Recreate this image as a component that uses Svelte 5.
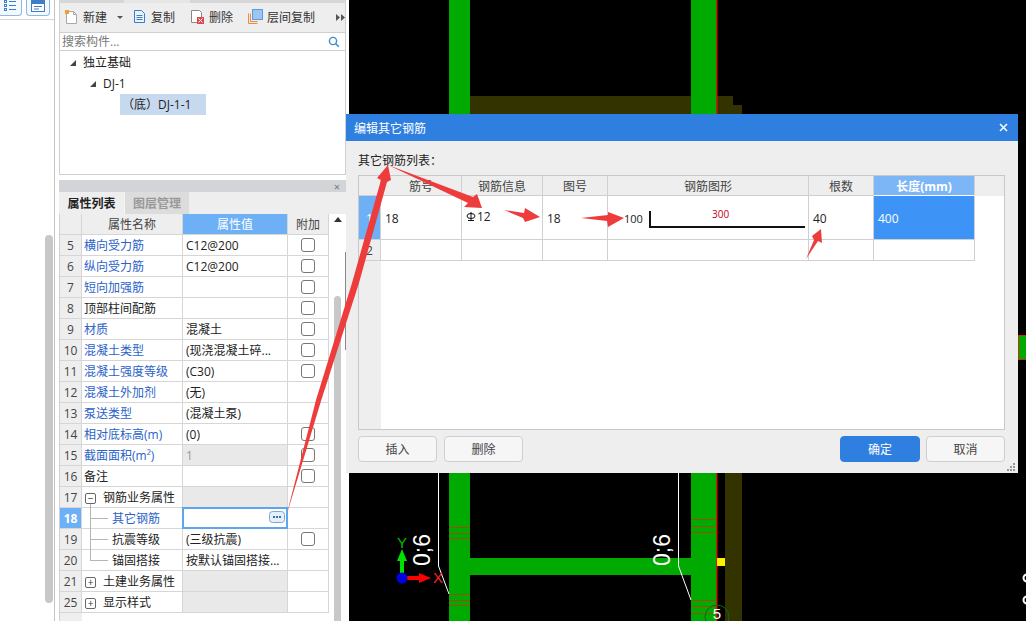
<script>
  const rows = [
    { n: 5, name: '横向受力筋', val: 'C12@200', blue: true, chk: true },
    { n: 6, name: '纵向受力筋', val: 'C12@200', blue: true, chk: true },
    { n: 7, name: '短向加强筋', val: '', blue: true, chk: true },
    { n: 8, name: '顶部柱间配筋', val: '', chk: true },
    { n: 9, name: '材质', val: '混凝土', blue: true, chk: true },
    { n: 10, name: '混凝土类型', val: '(现浇混凝土碎...', blue: true, chk: true },
    { n: 11, name: '混凝土强度等级', val: '(C30)', blue: true, chk: true },
    { n: 12, name: '混凝土外加剂', val: '(无)', blue: true },
    { n: 13, name: '泵送类型', val: '(混凝土泵)', blue: true },
    { n: 14, name: '相对底标高(m)', val: '(0)', blue: true, chk: true },
    { n: 15, name: '截面面积(m²)', val: '1', blue: true, chk: true, off: true },
    { n: 16, name: '备注', val: '', chk: true },
    { n: 17, name: '钢筋业务属性', val: '', off: true, group: '−', open: true },
    { n: 18, name: '其它钢筋', val: '', blue: true, child: true, sel: true },
    { n: 19, name: '抗震等级', val: '(三级抗震)', child: true, chk: true },
    { n: 20, name: '锚固搭接', val: '按默认锚固搭接...', child: true, last: true },
    { n: 21, name: '土建业务属性', val: '', off: true, group: '+' },
    { n: 25, name: '显示样式', val: '', off: true, group: '+' }
  ];
  const hatch = [
    [449, 470, [527, 533, 538, 594, 600, 605]],
    [691, 716, [519, 526, 532, 600, 606, 613]]
  ];
</script>

<div class="app">
  <aside class="rail">
    <div class="rail-tools">
      <div class="rail-btn">
        <svg width="14" height="12" viewBox="0 0 14 12"><g fill="none" stroke="#3c7fc8"><rect x="1.5" y="0.5" width="2" height="2"/><rect x="1.5" y="4.5" width="2" height="2"/><rect x="1.5" y="8.5" width="2" height="2"/><path d="M6 1.5h7M6 5.5h7M6 9.5h7"/></g></svg>
      </div>
      <div class="rail-btn">
        <svg width="15" height="12" viewBox="0 0 15 12"><rect x="0.5" y="0.5" width="13" height="11" fill="#fff" stroke="#3c7fc8"/><rect x="1" y="1" width="12" height="3" fill="#3c7fc8"/><path d="M3 6.5h8M3 9h5" stroke="#3c7fc8"/></svg>
      </div>
    </div>
    <div class="rail-thumb"></div>
  </aside>

  <section class="panel">
    <div class="top-strip"><span class="top-tab"></span></div>
    <div class="toolbar">
      <span class="tool new">
        <svg width="15" height="15" viewBox="0 0 15 15"><path d="M2.500 2.500h7l3 3v9h-10z" fill="#fff" stroke="#a9a9a9"/><path d="M9.500 2.500v3h3" fill="none" stroke="#a9a9a9"/><rect x="1" y="1" width="4" height="4" fill="#f0a030"/></svg>
        新建<i class="caret"></i>
      </span>
      <span class="tool copy">
        <svg width="13" height="15" viewBox="0 0 13 15"><path d="M1.500 1.500h7l3 3v9h-10z" fill="#eaf3fb" stroke="#3b7fc4"/><path d="M3.500 6.500h6M3.500 8.500h6M3.500 10.500h6" stroke="#3b7fc4"/></svg>
        复制
      </span>
      <span class="tool del">
        <svg width="15" height="15" viewBox="0 0 15 15"><path d="M1.500 1.500h8l2 2v10h-10z" fill="#fff" stroke="#888"/><rect x="7" y="8" width="7" height="7" fill="#d9484c"/><path d="M8.500 9.500l4 4M12.500 9.500l-4 4" stroke="#fff"/></svg>
        删除
      </span>
      <span class="tool floor">
        <svg width="15" height="15" viewBox="0 0 15 15"><path d="M.5 4.500v10h9" fill="none" stroke="#e88a40"/><path d="M2.500 4.500v8h7" fill="none" stroke="#e88a40"/><rect x="4.500" y="0.500" width="10" height="10" fill="#9cc6f2" stroke="#5d9ade"/></svg>
        层间复制
      </span>
      <svg class="more" width="9" height="7" viewBox="0 0 9 7"><path d="M0 0l4 3.500L0 7zM5 0l4 3.500L5 7z" fill="#555"/></svg>
    </div>
    <div class="search">
      <span>搜索构件...</span>
      <svg width="12" height="12" viewBox="0 0 12 12"><circle cx="5" cy="5" r="3.600" fill="none" stroke="#3c8ccc" stroke-width="1.400"/><path d="M7.800 7.800l3 3" stroke="#3c8ccc" stroke-width="1.600"/></svg>
    </div>
    <div class="tree">
      <div class="node lv0"><i class="tri"></i>独立基础</div>
      <div class="node lv1"><i class="tri"></i>DJ-1</div>
      <div class="node lv2"><span class="picked">（底）DJ-1-1</span></div>
    </div>

    <div class="prop-head"><span>×</span></div>
    <div class="tabs">
      <span class="tab on">属性列表</span>
      <span class="tab">图层管理</span>
    </div>
    <div class="prop-body">
      <div class="grid">
        <div class="row head">
          <div class="c num"></div>
          <div class="c title">属性名称</div>
          <div class="c title hot">属性值</div>
          <div class="c title">附加</div>
        </div>
        {#each rows as r}
          <div class="row">
            <div class="c num" class:numsel={r.sel}>{r.n}</div>
            <div class="c name" class:blue={r.blue} class:child={r.child} class:last={r.last} class:grp={r.group} class:open={r.open}>
              {#if r.group}<i class="box">{r.group}</i>{/if}{r.name}
            </div>
            <div class="c val" class:off={r.off} class:sel={r.sel}>
              {r.val}
              {#if r.sel}
                <svg class="dots" width="16" height="12" viewBox="0 0 16 12"><rect x="0.500" y="0.500" width="15" height="11" rx="3" fill="#e4f0fb" stroke="#7fa6cc"/><path d="M4 5h2v2H4zM7 5h2v2H7zM10 5h2v2h-2z" fill="#3c6ea0"/></svg>
              {/if}
            </div>
            <div class="c add">{#if r.chk}<i class="chk"></i>{/if}</div>
          </div>
        {/each}
        <div class="grid-rest"></div>
      </div>
      <div class="vscroll">
        <i class="up"></i>
        <div class="vthumb"></div>
      </div>
    </div>
    <div class="edge-mark"></div>
  </section>

  <main class="canvas">
    <svg width="677" height="621" viewBox="349 0 677 621">
      <path d="M470 96H733V105H742V114H470z" fill="#333300"/>
      <rect x="725" y="473" width="17" height="148" fill="#333300"/>
      <rect x="449" y="0" width="21" height="621" fill="#00aa00"/>
      <rect x="691" y="0" width="25" height="621" fill="#00aa00"/>
      <rect x="716" y="0" width="1.500" height="621" fill="#c81e00"/>
      <rect x="470" y="558" width="221" height="17" fill="#00aa00"/>
      <rect x="717" y="558" width="8" height="8" fill="#ffee00"/>
      <rect x="1018.500" y="335.500" width="10" height="24" fill="#00aa00" stroke="#c83000"/>
      {#each hatch as h}
        {#each h[2] as y}
          <path d="M{h[0]} {y + 0.5}H{h[1]}" stroke="#a04a10" stroke-width="1"/>
        {/each}
      {/each}
      <path d="M438.500 473V566L449 594M678.500 473V566L691 600" fill="none" stroke="#fff" stroke-width="1"/>
      <text class="dim" transform="translate(430 566) rotate(-90)">0;6</text>
      <text class="dim" transform="translate(670 566) rotate(-90)">0;6</text>
      <path d="M402 578V560" stroke="#00e000" stroke-width="4"/>
      <path d="M402 549L407 561H397z" fill="#00e000"/>
      <path d="M402 578H420" stroke="#ff0000" stroke-width="4"/>
      <path d="M431 578L419 573V583z" fill="#ff0000"/>
      <circle cx="402" cy="578" r="5.500" fill="#0000e0"/>
      <text class="axis" x="402" y="548" fill="#00c000" text-anchor="middle">Y</text>
      <text class="axis" x="438" y="583" fill="#ff2020" text-anchor="middle">X</text>
      <circle cx="717" cy="617" r="12" fill="none" stroke="#0a6a1a"/>
      <text class="axis" x="717" y="619" fill="#fff" text-anchor="middle">5</text>
      <circle cx="1027" cy="578" r="3.500" fill="none" stroke="#fff" stroke-width="2"/>
      <circle cx="1027" cy="600" r="3.500" fill="none" stroke="#fff" stroke-width="2"/>
    </svg>
  </main>

  <div class="dialog">
    <header class="dlg-title">
      <span>编辑其它钢筋</span>
      <svg width="9" height="9" viewBox="0 0 9 9"><path d="M1 1l7 7M8 1l-7 7" stroke="#fff" stroke-width="1.500"/></svg>
    </header>
    <div class="dlg-body">
      <div class="dlg-label">其它钢筋列表：</div>
      <div class="dtable">
        <div class="drow dhead">
          <div class="d"></div><div class="d">筋号</div><div class="d">钢筋信息</div><div class="d">图号</div><div class="d">钢筋图形</div><div class="d">根数</div><div class="d hot">长度(mm)</div>
        </div>
        <div class="drow r1">
          <div class="d rn on">1</div>
          <div class="d l">18</div>
          <div class="d l info">
            <svg width="10" height="10" viewBox="0 0 10 10"><path d="M5 0V8M2 8.500H8" stroke="#111" fill="none"/><ellipse cx="5" cy="4" rx="4" ry="2.500" fill="none" stroke="#111"/></svg>12
          </div>
          <div class="d l">18</div>
          <div class="d shape">
            <span class="s100">100</span>
            <span class="s300">300</span>
            <i class="rebar"></i>
          </div>
          <div class="d l">40</div>
          <div class="d l cur">400</div>
        </div>
        <div class="drow r2">
          <div class="d rn">2</div><div class="d"></div><div class="d"></div><div class="d"></div><div class="d"></div><div class="d"></div><div class="d"></div>
        </div>
        <div class="drest"></div>
      </div>
      <div class="dlg-foot">
        <button>插入</button>
        <button>删除</button>
        <span class="grow"></span>
        <button class="primary">确定</button>
        <button>取消</button>
      </div>
    </div>
    <svg class="grip" width="9" height="9" viewBox="0 0 9 9"><path d="M6 0h2v2H6zM3 3h2v2H3zM6 3h2v2H6zM0 6h2v2H0zM3 6h2v2H3zM6 6h2v2H6z" fill="#999"/></svg>
  </div>

  <svg class="arrows" width="1026" height="621" viewBox="0 0 1026 621">
    <g fill="#ee3c3c">
      <path d="M286 517L316 400L352 283L381 180L377 178L388 165L391 180L387 182L359 283L321 401z"/>
      <path d="M388 165L473 197L477 194L482 208L464 207L468 203z"/>
      <path d="M504 210L524 213L525 208L540 217L525 222L523 218z"/>
      <path d="M581 218L608 215L608 212L624 218L608 227L607 221z"/>
      <path d="M806 259L814 240L812 236L821 229L822 243L818 241z"/>
    </g>
  </svg>
</div>

<style>
  :global(body) { margin: 0; background: #000; }
  .app {
    position: relative;
    display: flex;
    width: 1026px;
    height: 621px;
    overflow: hidden;
    font: 12px/1 "Open Sans", "Noto Sans CJK SC", sans-serif;
    color: #222;
    background: #fff;
  }
  i { font-style: normal; display: block; }

  .rail {
    box-sizing: border-box;
    width: 55px;
    flex: none;
    border-right: 1px solid #c4c4c4;
    background: #fff;
    display: flex;
    flex-direction: column;
    align-items: flex-end;
  }
  .rail-tools {
    align-self: stretch;
    height: 19px;
    border-bottom: 1px solid #d5d5d5;
    display: flex;
    gap: 4px;
    overflow: hidden;
  }
  .rail-btn {
    box-sizing: border-box;
    width: 24px;
    height: 16px;
    margin-left: -2px;
    margin-right: 2px;
    border: 1px solid #8db7e0;
    border-top: 0;
    border-radius: 0 0 4px 4px;
    background: #f4f9fd;
    display: flex;
    justify-content: center;
    align-items: flex-end;
    padding-bottom: 3px;
  }
  .rail-thumb {
    width: 8px;
    height: 368px;
    margin: 215px 1px 0 0;
    border-radius: 4px;
    background: #c8c8c8;
  }

  .panel {
    position: relative;
    box-sizing: border-box;
    width: 291px;
    flex: none;
    padding: 0 0 0 4px;
    display: flex;
    flex-direction: column;
    background: #fff;
    margin-right: 3px;
  }
  .top-strip { height: 3px; background: #d6d6d6; flex: none; padding-left: 65px; }
  .top-tab { display: block; width: 66px; height: 3px; background: #e6e6e6; }
  .toolbar {
    box-sizing: border-box;
    height: 30px;
    flex: none;
    display: flex;
    align-items: center;
    background: #eeeeee;
    border: 1px solid #cfcfcf;
    border-top: 0;
    padding: 0 0 0 4px;
    color: #333;
  }
  .tool { display: flex; align-items: center; gap: 4px; }
  .tool svg { margin-top: -2px; }
  .new { width: 69px; }
  .copy { width: 57px; gap: 5px; }
  .del { width: 58px; }
  .floor { width: 91px; }
  .caret { margin-left: 6px; border: 3px solid transparent; border-top-color: #555; border-bottom: 0; }
  .more { margin-left: -3px; }
  .search {
    box-sizing: border-box;
    height: 18px;
    flex: none;
    display: flex;
    align-items: center;
    justify-content: space-between;
    padding: 1px 5px 0 2px;
    color: #777;
    border: 1px solid #cfcfcf;
    border-top: 0;
  }
  .tree {
    box-sizing: border-box;
    height: 124px;
    flex: none;
    border: 1px solid #cfcfcf;
    border-top: 0;
    padding-top: 1px;
  }
  .node { box-sizing: border-box; height: 21px; display: flex; align-items: center; color: #222; }
  .lv0 { padding-left: 10px; }
  .lv1 { padding-left: 30px; }
  .lv2 { padding: 0 0 0 60px; }
  .tri {
    width: 0; height: 0;
    margin-right: 7px;
    border-style: solid;
    border-width: 0 0 6px 6px;
    border-color: transparent transparent #444 transparent;
  }
  .picked { display: block; width: 86px; height: 21px; line-height: 22px; background: #c7d9ef; padding-left: 2px; box-sizing: border-box; }

  .prop-head {
    height: 12px;
    flex: none;
    margin-top: 5px;
    background: #d2d4d7;
    color: #777;
    display: flex;
    justify-content: flex-end;
    align-items: center;
    padding-right: 6px;
    font-size: 11px;
  }
  .tabs { height: 22px; flex: none; display: flex; background: #eee; }
  .tab {
    box-sizing: border-box;
    width: 65px;
    padding-top: 2px;
    display: flex;
    justify-content: center;
    align-items: center;
    background: #dcdcdc;
    color: #999;
    border-left: 1px solid #f4f4f4;
    font-weight: 600;
  }
  .tab.on { background: #eee; color: #222; border-left: 0; }

  .prop-body { display: flex; flex: 1; min-height: 0; border-left: 1px solid #cfcfcf; }
  .grid { width: 269px; flex: none; display: flex; flex-direction: column; }
  .row {
    display: grid;
    grid-template-columns: 22px 101px 105px 41px;
    height: 21px;
    flex: none;
  }
  .c {
    box-sizing: border-box;
    border-right: 1px solid #d6d6d6;
    border-bottom: 1px solid #d6d6d6;
    display: flex;
    align-items: center;
    position: relative;
    white-space: nowrap;
    padding-top: 2px;
  }
  .num { background: #eeeeee; justify-content: center; color: #444; }
  .numsel { background: #6eb0f5; color: #fff; font-weight: 700; }
  .title { background: #eeeeee; justify-content: center; color: #444; }
  .title.hot { background: #6eb0f5; color: #fff; }
  .name { padding-left: 2px; color: #222; }
  .name.blue { color: #2a62c8; }
  .name.grp { padding-left: 3px; gap: 7px; }
  .name.child { padding-left: 30px; }
  .box {
    box-sizing: border-box;
    width: 11px;
    height: 11px;
    border: 1px solid #666;
    border-radius: 2px;
    font-size: 10px;
    line-height: 8px;
    text-align: center;
    color: #333;
    background: #fff;
    position: relative;
    z-index: 1;
  }
  .name.open::after {
    content: "";
    position: absolute;
    left: 8px; top: 16px; bottom: -1px;
    border-left: 1px solid #b5b5b5;
  }
  .name.child::before {
    content: "";
    position: absolute;
    left: 8px; top: -1px; bottom: -1px;
    border-left: 1px solid #b5b5b5;
  }
  .name.child::after {
    content: "";
    position: absolute;
    left: 8px; width: 18px; top: 10px;
    border-top: 1px solid #b5b5b5;
  }
  .name.last::before { bottom: 10px; }
  .val { padding-left: 3px; color: #222; }
  .val.off { background: #e9e9e9; color: #999; }
  .val.sel { border: 2px solid #5da5ee; margin: -1px 0 0 -1px; height: 22px; width: 106px; z-index: 1; background: #fff; }
  .dots { position: absolute; right: 1px; top: 2px; }
  .c.add { justify-content: center; padding-top: 0; }
  .chk { box-sizing: border-box; width: 14px; height: 14px; border: 1px solid #777; border-radius: 3px; background: #fff; margin-left: -1px; }
  .grid-rest { flex: 1; width: 22px; background: #eee; }
  .vscroll { flex: 1; display: flex; flex-direction: column; align-items: center; }
  .up { width: 0; height: 0; margin-top: 3px; border: 4px solid transparent; border-bottom: 5px solid #333; border-top: 0; }
  .vthumb { width: 7px; flex: 1; margin-top: 74px; border-radius: 4px 4px 0 0; background: #c8c8c8; }
  .edge-mark { position: absolute; right: 0; top: 252px; height: 98px; width: 1px; background: #888; }

  .canvas { flex: 1; background: #000; min-width: 0; }
  .canvas svg { display: block; }
  .dim { font: 23px "Liberation Sans", sans-serif; fill: #fff; }
  .axis { font: 15px "Liberation Sans", sans-serif; }

  .dialog {
    position: absolute;
    left: 346px;
    top: 114px;
    width: 672px;
    height: 359px;
    background: #eeeeee;
    display: flex;
    flex-direction: column;
  }
  .dlg-title {
    box-sizing: border-box;
    height: 27px;
    flex: none;
    background: #2f7fe0;
    color: #fff;
    display: flex;
    align-items: center;
    justify-content: space-between;
    padding: 2px 10px 0 8px;
  }
  .dlg-title svg { margin-top: -2px; }
  .dlg-body { flex: 1; padding: 0 13px 0 12px; display: flex; flex-direction: column; min-height: 0; }
  .dlg-label { height: 34px; flex: none; line-height: 40px; color: #222; }
  .dtable {
    box-sizing: border-box;
    height: 255px;
    flex: none;
    border: 1px solid #c8c8c8;
    background: #fff;
    display: flex;
    flex-direction: column;
  }
  .drow {
    display: grid;
    grid-template-columns: 22px 81px 81px 65px 201px 65px 101px;
    flex: none;
  }
  .dhead { height: 20px; background: #eeeeee; color: #444; }
  .r1 { height: 44px; }
  .r2 { height: 21px; }
  .d {
    box-sizing: border-box;
    border-right: 1px solid #d0d0d0;
    border-bottom: 1px solid #d0d0d0;
    display: flex;
    align-items: center;
    justify-content: center;
    padding-top: 2px;
  }
  .d.hot { background: #7db6f7; color: #fff; font-weight: 700; border-bottom: 1px solid #fff; }
  .rn { background: #eee; color: #444; }
  .rn.on { background: #6eb0f5; color: #fff; }
  .d.l { justify-content: flex-start; padding-left: 4px; }
  .info { gap: 1px; padding-bottom: 4px; }
  .cur { background: #3d94f6; color: #fff; }
  .shape { position: relative; }
  .s100 { position: absolute; left: 16px; top: 17px; font-size: 11px; }
  .s300 { position: absolute; left: 104px; top: 13px; font-size: 10px; color: #c00020; }
  .rebar {
    position: absolute;
    left: 41px;
    top: 15px;
    width: 156px;
    height: 17px;
    box-sizing: border-box;
    border-left: 2px solid #111;
    border-bottom: 2px solid #111;
  }
  .drest { flex: 1; width: 22px; background: #eee; }
  .dlg-foot { display: flex; gap: 7px; margin-top: 6px; }
  .grow { flex: 1; }
  button {
    width: 79px;
    height: 26px;
    padding: 2px 0 0;
    box-sizing: border-box;
    border: 1px solid #cfcfcf;
    border-radius: 4px;
    background: #f6f6f6;
    color: #444;
    font: inherit;
  }
  button.primary { width: 80px; margin-right: -1px; background: #2f7fe0; border-color: #2f7fe0; color: #fff; }
  .grip { position: absolute; right: 2px; bottom: 1px; }
  .arrows { position: absolute; left: 0; top: 0; pointer-events: none; }
</style>
